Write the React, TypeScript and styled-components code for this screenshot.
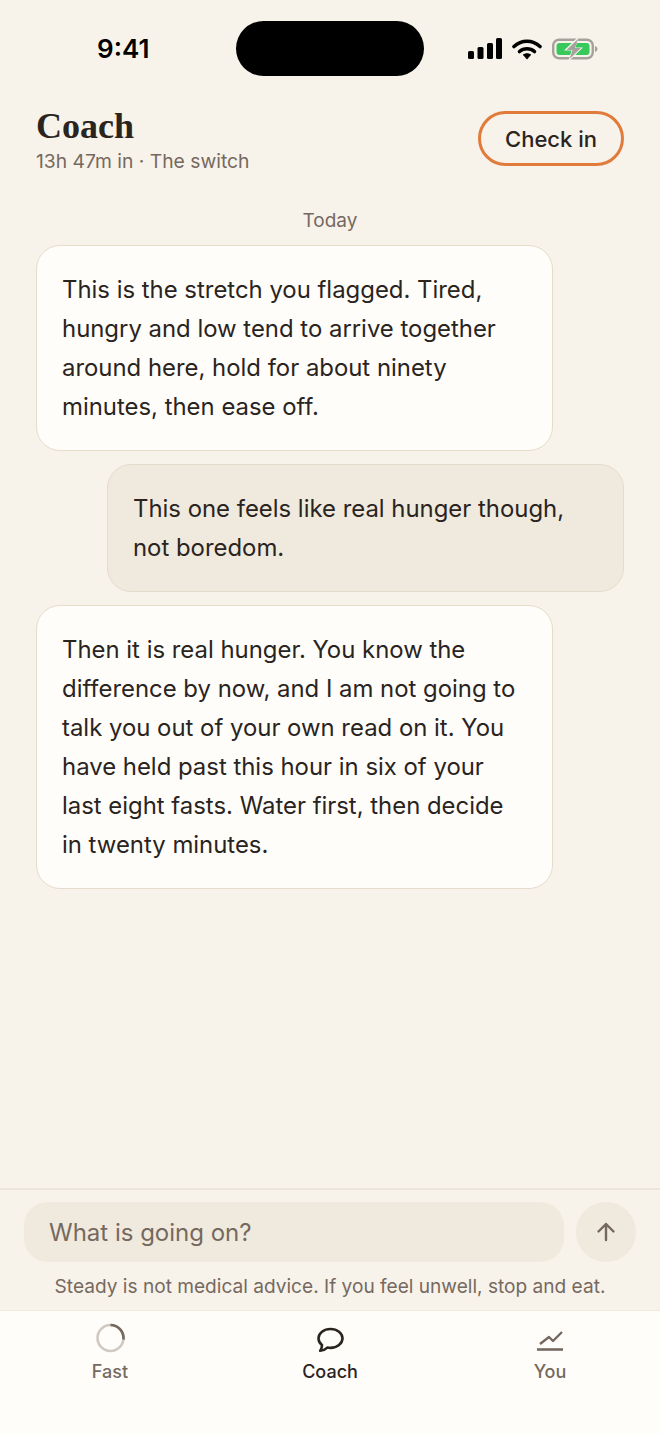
import styled, { createGlobalStyle } from "styled-components";

const GlobalStyle = createGlobalStyle`
  html, body {
    margin: 0;
    padding: 0;
    background: #f7f2ea;
  }
  * {
    box-sizing: border-box;
  }
`;

const Screen = styled.div`
  width: 660px;
  height: 1434px;
  display: flex;
  flex-direction: column;
  background: #f7f2ea;
  color: #2a241f;
  font-family: Inter, "Liberation Sans", sans-serif;
`;

const StatusBar = styled.div`
  height: 96px;
  flex: none;
  display: flex;
  align-items: flex-start;
  padding: 21px 62px 0 97px;
`;

const Clock = styled.div`
  width: 139px;
  font-size: 26px;
  line-height: 55px;
  font-weight: 600;
  color: #000;
`;

const Island = styled.div`
  width: 188px;
  height: 55px;
  border-radius: 28px;
  background: #000;
`;

const StatusIcons = styled.div`
  margin-left: 44px;
  height: 55px;
  display: flex;
  align-items: center;
  gap: 10px;
`;

const Header = styled.header`
  flex: none;
  display: flex;
  justify-content: space-between;
  align-items: flex-start;
  padding: 9px 36px 0 36px;
  height: 100px;
`;

const TitleBlock = styled.div`
  display: flex;
  flex-direction: column;
`;

const Title = styled.h1`
  margin: 0;
  font-family: "Liberation Serif", serif;
  font-size: 36px;
  line-height: 42px;
  font-weight: 700;
  color: #2a241f;
`;

const Subtitle = styled.div`
  font-size: 19.3px;
  line-height: 28px;
  color: #75695f;
`;

const CheckIn = styled.button`
  margin-top: 6px;
  width: 146px;
  height: 55px;
  border: 3px solid #e07b3c;
  border-radius: 28px;
  background: transparent;
  color: #2a241f;
  font-family: inherit;
  font-size: 22px;
  font-weight: 500;
`;

const Thread = styled.main`
  flex: 1;
  min-height: 0;
  display: flex;
  flex-direction: column;
  gap: 13px;
  padding: 0 36px;
`;

const DayLabel = styled.div`
  height: 49px;
  margin-bottom: -13px;
  padding-top: 12px;
  text-align: center;
  font-size: 19px;
  line-height: 26px;
  color: #75695f;
`;

const Bubble = styled.div<{ $mine?: boolean }>`
  width: 517px;
  align-self: ${({ $mine }) => ($mine ? "flex-end" : "flex-start")};
  padding: 24px 25px;
  border: 1px solid #e6dccb;
  border-radius: 24px;
  background: ${({ $mine }) => ($mine ? "#f0e9dd" : "#fffdf9")};
  font-size: 23.9px;
  line-height: 39px;
  color: #2a241f;
`;

const Composer = styled.div`
  flex: none;
  height: 122px;
  padding: 12px 24px 0;
  border-top: 2px solid #ece4d8;
`;

const InputRow = styled.div`
  display: flex;
  gap: 12px;
`;

const MessageBox = styled.div`
  flex: 1;
  height: 60px;
  padding: 0 25px;
  display: flex;
  align-items: center;
  border-radius: 24px;
  background: #f0e9dd;
  font-size: 24px;
  color: #75695f;
`;

const SendButton = styled.button`
  width: 60px;
  height: 60px;
  padding: 0;
  border: 0;
  border-radius: 50%;
  background: #f0e9dd;
  display: flex;
  align-items: center;
  justify-content: center;
`;

const Disclaimer = styled.div`
  margin-top: 11px;
  text-align: center;
  font-size: 19.1px;
  line-height: 26px;
  color: #75695f;
`;

const TabBar = styled.nav`
  flex: none;
  height: 124px;
  display: grid;
  grid-template-columns: repeat(3, 1fr);
  background: #fffdf9;
  border-top: 1px solid #f0e9dd;
`;

const Tab = styled.div<{ $active?: boolean }>`
  height: 74px;
  padding-top: 11px;
  display: flex;
  flex-direction: column;
  align-items: center;
  gap: 6px;
  font-size: 18px;
  line-height: 24px;
  font-weight: 500;
  color: ${({ $active }) => ($active ? "#2a241f" : "#75695f")};
`;

const TabIcon = styled.svg`
  width: 32px;
  height: 32px;
  display: block;
`;

const App = () => (
  <Screen>
    <GlobalStyle />
    <StatusBar>
      <Clock>9:41</Clock>
      <Island />
      <StatusIcons>
        <svg width="34" height="22" viewBox="0 0 34 22">
          <rect x="0" y="13" width="6" height="8" rx="1.5" fill="#000" />
          <rect x="9.5" y="9" width="6" height="12" rx="1.5" fill="#000" />
          <rect x="19" y="5" width="6" height="16" rx="1.5" fill="#000" />
          <rect x="28" y="0" width="6" height="21" rx="1.5" fill="#000" />
        </svg>
        <svg width="30" height="22" viewBox="0 0 30 22" fill="none">
          <path d="M2 8.5C9.5 1.5 20.5 1.5 28 8.5" stroke="#000" strokeWidth="3.6" strokeLinecap="round" />
          <path d="M7.5 13.5C11.8 9.8 18.2 9.8 22.5 13.5" stroke="#000" strokeWidth="3.6" strokeLinecap="round" />
          <path d="M10.8 16.8C13.2 14.8 16.8 14.8 19.2 16.8L15 21.5Z" fill="#000" />
        </svg>
        <svg width="46" height="24" viewBox="0 0 46 24" fill="none">
          <rect x="1.2" y="2.7" width="39.6" height="18.6" rx="6" stroke="#a5a19b" strokeWidth="2.4" />
          <rect x="4.5" y="6" width="33" height="12" rx="3" fill="#37c95c" />
          <path d="M43 9C44.6 9.5 45.5 10.6 45.5 12S44.6 14.5 43 15Z" fill="#a5a19b" />
          <path d="M27 -1L12 13.5H19.5L16 25L31 10.5H23.5Z" fill="#f7f2ea" />
          <path d="M26 2L14.5 13H20.5L17.5 22L29 11H23Z" fill="#a5a19b" />
        </svg>
      </StatusIcons>
    </StatusBar>

    <Header>
      <TitleBlock>
        <Title>Coach</Title>
        <Subtitle>13h 47m in · The switch</Subtitle>
      </TitleBlock>
      <CheckIn>Check in</CheckIn>
    </Header>

    <Thread>
      <DayLabel>Today</DayLabel>
      <Bubble>
        This is the stretch you flagged. Tired, hungry and low tend to arrive together around here, hold for about
        ninety minutes, then ease off.
      </Bubble>
      <Bubble $mine>This one feels like real hunger though, not boredom.</Bubble>
      <Bubble>
        Then it is real hunger. You know the difference by now, and I am not going to talk you out of your own read on
        it. You have held past this hour in six of your last eight fasts. Water first, then decide in twenty minutes.
      </Bubble>
    </Thread>

    <Composer>
      <InputRow>
        <MessageBox>What is going on?</MessageBox>
        <SendButton aria-label="Send">
          <svg width="22" height="24" viewBox="0 0 22 24" fill="none">
            <path d="M11 20V4M3.5 11.5L11 4L18.5 11.5" stroke="#75695f" strokeWidth="2.4" strokeLinecap="round" strokeLinejoin="round" />
          </svg>
        </SendButton>
      </InputRow>
      <Disclaimer>Steady is not medical advice. If you feel unwell, stop and eat.</Disclaimer>
    </Composer>

    <TabBar>
      <Tab>
        <TabIcon viewBox="0 0 32 32" fill="none">
          <circle cx="16.5" cy="16" r="13" stroke="#cfc9c2" strokeWidth="2.6" />
          <path d="M16.5 3A13 13 0 0 1 29.4 17.5" stroke="#75695f" strokeWidth="2.6" />
        </TabIcon>
        Fast
      </Tab>
      <Tab $active>
        <TabIcon viewBox="0 0 32 32" fill="none">
          <path
            d="M16.5 7C9.8 7 4.5 11 4.5 16.3C4.5 19 5.8 21.4 8 23C8 25 7.4 27 6.2 28.8C9 28.6 11.5 27.4 13.3 25.6C14.3 25.8 15.4 25.9 16.5 25.9C23.2 25.9 28.5 21.6 28.5 16.3C28.5 11 23.2 7 16.5 7Z"
            stroke="#2a241f"
            strokeWidth="2.6"
            strokeLinejoin="round"
          />
        </TabIcon>
        Coach
      </Tab>
      <Tab>
        <TabIcon viewBox="0 0 32 32" fill="none">
          <path d="M6 22L15 15L19 19L28 10" stroke="#75695f" strokeWidth="2.4" strokeLinejoin="round" />
          <path d="M3 27.5H29" stroke="#75695f" strokeWidth="2.6" />
        </TabIcon>
        You
      </Tab>
    </TabBar>
  </Screen>
);

export default App;
